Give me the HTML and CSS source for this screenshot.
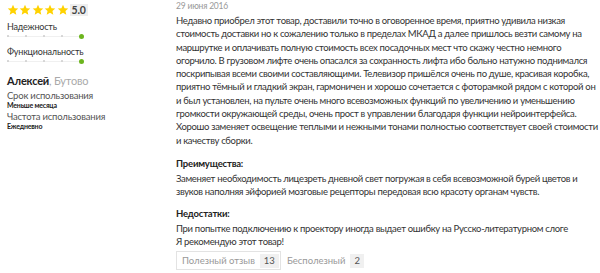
FILE: index.html
```html
<!DOCTYPE html>
<html lang="ru">
  <head>
    <meta charset="UTF-8" />
    <title>Отзыв</title>
    <link rel="stylesheet" href="styles.css">
  </head>
  <body>
    <article class="review">
      <aside class="review-meta">
        <div class="review-rating">
          <span class="review-stars">
            <svg viewBox="0 0 24 24"><path d="M12 1.5l3.1 7 7.4.6-5.6 4.9 1.7 7.3L12 17.4l-6.6 3.9 1.7-7.3-5.6-4.9 7.4-.6z"/></svg>
            <svg viewBox="0 0 24 24"><path d="M12 1.5l3.1 7 7.4.6-5.6 4.9 1.7 7.3L12 17.4l-6.6 3.9 1.7-7.3-5.6-4.9 7.4-.6z"/></svg>
            <svg viewBox="0 0 24 24"><path d="M12 1.5l3.1 7 7.4.6-5.6 4.9 1.7 7.3L12 17.4l-6.6 3.9 1.7-7.3-5.6-4.9 7.4-.6z"/></svg>
            <svg viewBox="0 0 24 24"><path d="M12 1.5l3.1 7 7.4.6-5.6 4.9 1.7 7.3L12 17.4l-6.6 3.9 1.7-7.3-5.6-4.9 7.4-.6z"/></svg>
            <svg viewBox="0 0 24 24"><path d="M12 1.5l3.1 7 7.4.6-5.6 4.9 1.7 7.3L12 17.4l-6.6 3.9 1.7-7.3-5.6-4.9 7.4-.6z"/></svg>
          </span>
          <span class="review-score">5.0</span>
        </div>

        <div class="review-param">
          <div class="review-param-name">Надежность</div>
          <div class="review-scale">
            <i></i><i></i><i></i><i></i><i class="is-active"></i>
          </div>
        </div>
        <div class="review-param">
          <div class="review-param-name">Функциональность</div>
          <div class="review-scale">
            <i></i><i></i><i></i><i></i><i class="is-active"></i>
          </div>
        </div>

        <div class="review-author"><b>Алексей</b>, <span>Бутово</span></div>

        <dl class="review-usage">
          <dt>Срок использования</dt>
          <dd>Меньше месяца</dd>
          <dt>Частота использования</dt>
          <dd>Ежедневно</dd>
        </dl>
      </aside>

      <div class="review-body">
        <time class="review-date">29 июня 2016</time>
        <p class="review-text">Недавно приобрел этот товар, доставили точно в оговоренное время, приятно удивила низкая стоимость доставки но к сожалению только в пределах МКАД а далее пришлось везти самому на маршрутке и оплачивать полную стоимость всех посадочных мест что скажу честно немного огорчило. В грузовом лифте очень опасался за сохранность лифта ибо больно натужно поднимался поскрипывая всеми своими составляющими. Телевизор пришёлся очень по душе, красивая коробка, приятно тёмный и гладкий экран, гармоничен и хорошо сочетается с фоторамкой рядом с которой он и был установлен, на пульте очень много всевозможных функций по увеличению и уменьшению громкости окружающей среды, очень прост в управлении благодаря функции нейроинтерфейса. Хорошо заменяет освещение теплыми и нежными тонами полностью соответствует своей стоимости и качеству сборки.</p>

        <h4 class="review-title">Преимущества:</h4>
        <p class="review-text">Заменяет необходимость лицезреть дневной свет погружая в себя всевозможной бурей цветов и звуков наполняя эйфорией мозговые рецепторы передовая всю красоту органам чувств.</p>

        <h4 class="review-title is-next">Недостатки:</h4>
        <p class="review-text">При попытке подключению к проектору иногда выдает ошибку на Русско-литературном слоге<br>Я рекомендую этот товар!</p>

        <div class="review-votes">
          <button class="review-vote is-bordered">Полезный отзыв <span>13</span></button>
          <button class="review-vote">Бесполезный <span>2</span></button>
        </div>
      </div>
    </article>
  </body>
</html>
```

FILE: styles.css
```css
body {
  margin: 0;
  background: #fff;
  font-family: Lato, "Open Sans", Arial, sans-serif;
  letter-spacing: -0.2px;
  color: #333;
}

.review {
  display: flex;
  padding: 0 0 0 7px;
}

/* left column */
.review-meta {
  width: 169px;
  flex-shrink: 0;
  padding-top: 4px;
}

.review-rating {
  display: flex;
  align-items: center;
  gap: 1px;
}

.review-stars {
  display: flex;
  gap: 0.4px;

  svg {
    width: 12px;
    height: 12px;
    fill: #ffd200;
  }
}

.review-score {
  background: #eee;
  font-size: 10.5px;
  font-weight: 700;
  line-height: 12px;
  padding: 0 2px;
  color: #444;
}

.review-param {
  margin-top: 6px;

  & + .review-param {
    margin-top: 7px;
  }
}

.review-param-name {
  font-size: 9px;
  line-height: 10px;
  color: #333;
}

.review-scale {
  display: flex;
  justify-content: space-between;
  align-items: center;
  width: 77px;
  height: 8px;
  background: linear-gradient(#f0f0f0, #f0f0f0) center / 100% 1px no-repeat;

  i {
    width: 2px;
    height: 2px;
    border-radius: 50%;
    background: #ccc;
  }

  .is-active {
    width: 5px;
    height: 5px;
    background: #6cb51e;
  }
}

.review-author {
  margin-top: 9px;
  font-size: 11px;
  line-height: 14px;
  color: #aaa;

  b {
    color: #222;
    font-weight: 700;
  }
}

.review-usage {
  margin: 3px 0 0;
  font-size: 9.5px;

  dt {
    color: #555;
    line-height: 10px;
  }

  dd {
    margin: 0 0 2px;
    font-size: 7px;
    font-weight: 700;
    line-height: 9px;
    color: #222;
  }
}

/* right column */
.review-body {
  flex: 1;
}

.review-date {
  display: block;
  font-size: 8.5px;
  line-height: 12px;
  color: #999;
}

.review-text {
  margin: 2px 0 0;
  font-size: 9.5px;
  letter-spacing: -0.32px;
  line-height: 13.3px;
  color: #333;
}

.review-title {
  margin: 10px 0 0;
  font-size: 9.5px;
  font-weight: 700;
  line-height: 13px;
  color: #222;

  &.is-next {
    margin-top: 8px;
  }
}

.review-votes {
  display: flex;
  margin-top: 3px;
}

.review-vote {
  display: flex;
  align-items: center;
  gap: 5px;
  height: 19px;
  padding: 0 1px 0 5px;
  border: 1px solid transparent;
  background: none;
  font-family: inherit;
  font-size: 9.5px;
  color: #999;

  &.is-bordered {
    border-color: #e3e3e3;
  }

  span {
    background: #f0f0f0;
    color: #555;
    padding: 1px 4px;
    line-height: 12px;
  }
}
```
